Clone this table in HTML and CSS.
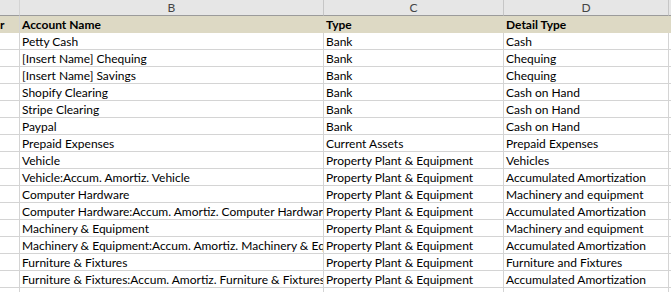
FILE: index.html
```html
<!DOCTYPE html>
<html>
<head>
<meta charset="utf-8">
<link rel="stylesheet" href="styles.css">
</head>
<body>
<div class="sheet">
  <div class="row colheads">
    <div class="cell a"></div>
    <div class="cell b">B</div>
    <div class="cell c">C</div>
    <div class="cell d">D</div>
    <div class="cell e"></div>
  </div>
  <div class="row titles">
    <div class="cell a">r</div>
    <div class="cell b">Account Name</div>
    <div class="cell c">Type</div>
    <div class="cell d">Detail Type</div>
    <div class="cell e"></div>
  </div>
  <div class="row"><div class="cell a"></div><div class="cell b">Petty Cash</div><div class="cell c">Bank</div><div class="cell d">Cash</div><div class="cell e"></div></div>
  <div class="row"><div class="cell a"></div><div class="cell b">[Insert Name] Chequing</div><div class="cell c">Bank</div><div class="cell d">Chequing</div><div class="cell e"></div></div>
  <div class="row"><div class="cell a"></div><div class="cell b">[Insert Name] Savings</div><div class="cell c">Bank</div><div class="cell d">Chequing</div><div class="cell e"></div></div>
  <div class="row"><div class="cell a"></div><div class="cell b">Shopify Clearing</div><div class="cell c">Bank</div><div class="cell d">Cash on Hand</div><div class="cell e"></div></div>
  <div class="row"><div class="cell a"></div><div class="cell b">Stripe Clearing</div><div class="cell c">Bank</div><div class="cell d">Cash on Hand</div><div class="cell e"></div></div>
  <div class="row"><div class="cell a"></div><div class="cell b">Paypal</div><div class="cell c">Bank</div><div class="cell d">Cash on Hand</div><div class="cell e"></div></div>
  <div class="row"><div class="cell a"></div><div class="cell b">Prepaid Expenses</div><div class="cell c">Current Assets</div><div class="cell d">Prepaid Expenses</div><div class="cell e"></div></div>
  <div class="row"><div class="cell a"></div><div class="cell b">Vehicle</div><div class="cell c">Property Plant &amp; Equipment</div><div class="cell d">Vehicles</div><div class="cell e"></div></div>
  <div class="row"><div class="cell a"></div><div class="cell b">Vehicle:Accum. Amortiz. Vehicle</div><div class="cell c">Property Plant &amp; Equipment</div><div class="cell d">Accumulated Amortization</div><div class="cell e"></div></div>
  <div class="row"><div class="cell a"></div><div class="cell b">Computer Hardware</div><div class="cell c">Property Plant &amp; Equipment</div><div class="cell d">Machinery and equipment</div><div class="cell e"></div></div>
  <div class="row"><div class="cell a"></div><div class="cell b">Computer Hardware:Accum. Amortiz. Computer Hardware</div><div class="cell c">Property Plant &amp; Equipment</div><div class="cell d">Accumulated Amortization</div><div class="cell e"></div></div>
  <div class="row"><div class="cell a"></div><div class="cell b">Machinery &amp; Equipment</div><div class="cell c">Property Plant &amp; Equipment</div><div class="cell d">Machinery and equipment</div><div class="cell e"></div></div>
  <div class="row"><div class="cell a"></div><div class="cell b">Machinery &amp; Equipment:Accum. Amortiz. Machinery &amp; Equipment</div><div class="cell c">Property Plant &amp; Equipment</div><div class="cell d">Accumulated Amortization</div><div class="cell e"></div></div>
  <div class="row"><div class="cell a"></div><div class="cell b">Furniture &amp; Fixtures</div><div class="cell c">Property Plant &amp; Equipment</div><div class="cell d">Furniture and Fixtures</div><div class="cell e"></div></div>
  <div class="row"><div class="cell a"></div><div class="cell b">Furniture &amp; Fixtures:Accum. Amortiz. Furniture &amp; Fixtures</div><div class="cell c">Property Plant &amp; Equipment</div><div class="cell d">Accumulated Amortization</div><div class="cell e"></div></div>
  <div class="row"><div class="cell a"></div><div class="cell b"></div><div class="cell c"></div><div class="cell d"></div><div class="cell e"></div></div>
</div>
</body>
</html>
```
FILE: styles.css
```css
html, body {
  margin: 0;
  padding: 0;
  background: #ffffff;
  overflow: hidden;
}
.sheet {
  width: 671px;
  font-family: Lato, "Liberation Sans", Arial, sans-serif;
  font-size: 12px;
  color: #000000;
}
.row {
  display: grid;
  grid-template-columns: 20px 304px 180px 165px 2px;
  height: 17px;
}
.cell {
  box-sizing: border-box;
  border-right: 1px solid #d4d4d4;
  border-bottom: 1px solid #d4d4d4;
  white-space: nowrap;
  overflow: hidden;
  text-overflow: clip;
  line-height: 16px;
  padding-top: 1px;
  padding-left: 2px;
}
.cell.e {
  border-right: none;
  padding: 0;
}
.colheads {
  height: 16px;
  background: #e6e6e6;
}
.colheads .cell {
  border-bottom: 1px solid #9b9b9b;
  border-right: 1px solid #c6c6c6;
  text-align: center;
  color: #444444;
  padding: 0;
  line-height: 15px;
  font-size: 12px;
}
.colheads .cell.e {
  border-right: none;
}
.titles {
  background: #ddd9c4;
}
.titles .cell {
  border-bottom-color: #ddd9c4;
  border-right-color: #ddd9c4;
  font-weight: bold;
}
.titles .cell.a {
  padding-left: 0;
}
.titles .cell.a, .row .cell.a {
  border-right-color: #d4d4d4;
}
```
